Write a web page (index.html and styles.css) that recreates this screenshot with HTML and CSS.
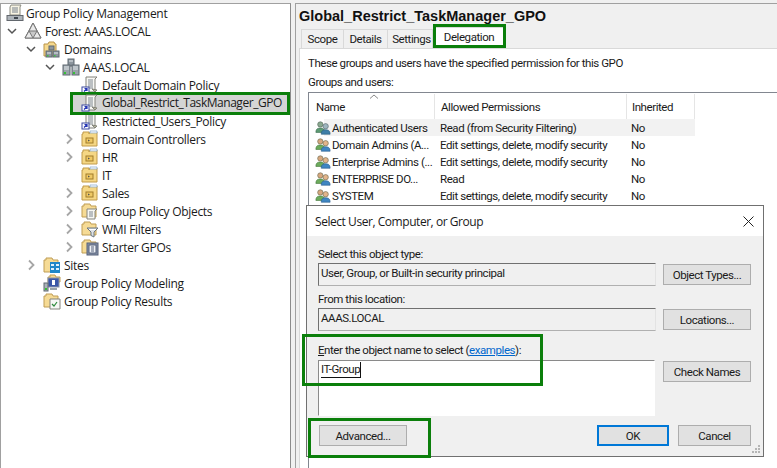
FILE: index.html
```html
<!DOCTYPE html>
<html lang="en">
<head>
<meta charset="utf-8">
<title>Group Policy Management</title>
<link rel="stylesheet" href="styles.css">
</head>
<body>
<svg class="defs" aria-hidden="true">
  <symbol id="i-root" viewBox="0 0 20 18">
    <path d="M5 1h10l-1 2v8H4V3z" fill="#f7f3e3" stroke="#8a8a80"/>
    <path d="M6 4h6M6 6h6M6 8h6" stroke="#77808c"/>
    <rect x="1" y="11.5" width="16" height="5" fill="#aeb4ba" stroke="#62676d"/>
    <rect x="8" y="13" width="4" height="2" fill="#3f464e"/>
  </symbol>
  <symbol id="i-forest" viewBox="0 0 18 18">
    <path d="M9 1l8 15H1z" fill="#c9c9c9" stroke="#6d6d6d"/>
    <path d="M9 1l-4 8h8zM5 9l-4 7h8zM13 9l-4 7h8z" fill="#e9e9e9" stroke="#777"/>
  </symbol>
  <symbol id="i-domains" viewBox="0 0 18 18">
    <path d="M1 16V4h4l1-2h5l1 2h1v12z" fill="#f6d98d" stroke="#b9944a"/>
    <rect x="6" y="6" width="5" height="4" fill="#8d969e" stroke="#5f6870"/>
    <rect x="3" y="11" width="6" height="6" fill="#8d969e" stroke="#5f6870"/>
    <rect x="10" y="11" width="6" height="6" fill="#8d969e" stroke="#5f6870"/>
    <path d="M4 13h4M11 13h4" stroke="#dfe4e8"/>
    <rect x="4" y="15" width="1.5" height="1.5" fill="#3fc23f"/>
    <rect x="11" y="15" width="1.5" height="1.5" fill="#3fc23f"/>
  </symbol>
  <symbol id="i-domain" viewBox="0 0 18 18">
    <rect x="6" y="1" width="6" height="7" fill="#8d969e" stroke="#5f6870"/>
    <rect x="1" y="7" width="7" height="10" fill="#9aa3aa" stroke="#5f6870"/>
    <rect x="10" y="7" width="7" height="10" fill="#9aa3aa" stroke="#5f6870"/>
    <path d="M7 3h4M2 9h5M2 11h5M11 9h5M11 11h5" stroke="#e3e7ea"/>
    <rect x="2" y="14" width="2" height="2" fill="#35c135"/>
    <rect x="11" y="14" width="2" height="2" fill="#35c135"/>
  </symbol>
  <symbol id="i-gpo" viewBox="0 0 18 18">
    <path d="M5 1h11l-2 2v13H5z" fill="#f8f8f4" stroke="#83837c"/>
    <path d="M7 4h5M7 6h5M7 8h5M7 10h5M7 12h5" stroke="#7f8790"/>
    <path d="M11 13l3 3 2-2z" fill="#b8b8a0" stroke="#85857a"/>
    <rect x="1" y="11" width="7" height="6" fill="#fff" stroke="#3c4aa0"/>
    <path d="M3 15.500l3-3M3.500 12.500H6V15" fill="none" stroke="#2435b5" stroke-width="1.200"/>
  </symbol>
  <symbol id="i-ou" viewBox="0 0 18 18">
    <path d="M1 16V4h1V2h6v2l1-2h7v14z" fill="#f5d784" stroke="#c19b4a"/>
    <path d="M9 1h7v2H9z" fill="#fff" stroke="#7fa5c8" stroke-width=".7"/>
    <rect x="5" y="8" width="7" height="5" fill="#efc964" stroke="#a17c2b"/>
    <path d="M7 9.500l2 1-2 1z" fill="#555"/>
  </symbol>
  <symbol id="i-gpos" viewBox="0 0 18 18">
    <path d="M1 15V4h2V2h6l1 2h5v11z" fill="#f6db95" stroke="#bf9d55"/>
    <path d="M6 7h10l-2 2v8H6z" fill="#f7f7f2" stroke="#85857e"/>
    <path d="M8 10h4M8 12h4M8 14h4" stroke="#7f8790"/>
  </symbol>
  <symbol id="i-wmi" viewBox="0 0 18 18">
    <path d="M1 15V4h2V2h6l1 2h5v11z" fill="#f6db95" stroke="#bf9d55"/>
    <path d="M6 8h11l-4 4v5l-3-1.500V12z" fill="#dfe3e7" stroke="#6b7680"/>
    <path d="M8 9.500h7" stroke="#fff"/>
  </symbol>
  <symbol id="i-starter" viewBox="0 0 18 18">
    <path d="M1 15V4h2V2h6l1 2h5v11z" fill="#f6db95" stroke="#bf9d55"/>
    <rect x="6" y="5" width="11" height="12" fill="#8793a8" stroke="#55607a"/>
    <rect x="8" y="7" width="7" height="8" fill="#eef1f6" stroke="#55607a"/>
    <path d="M10 9h3M10 11h3M10 13h3" stroke="#55607a"/>
  </symbol>
  <symbol id="i-sites" viewBox="0 0 18 18">
    <path d="M1 16V4h2V2h6l1 2h5v12z" fill="#f6db95" stroke="#bf9d55"/>
    <rect x="7" y="6" width="10" height="11" fill="#1f87c9"/>
    <path d="M8 8h3v2H8zM13 8h3v2h-3zM8 12h3v2H8zM13 12h3v2h-3z" fill="#dff1fb"/>
  </symbol>
  <symbol id="i-model" viewBox="0 0 18 18">
    <path d="M5 8V3h2V1h5l1 2h4v5z" fill="#f6db95" stroke="#bf9d55"/>
    <rect x="5" y="4" width="11" height="9" fill="#3a56a8" stroke="#8a94a8"/>
    <path d="M9 6h3v5H9z" fill="#fff"/>
    <path d="M7 14h7v2H7z" fill="#9aa3aa"/>
    <rect x="1" y="9" width="4" height="8" fill="#aab2b8" stroke="#5f6870"/>
    <rect x="2" y="14" width="2" height="2" fill="#35c135"/>
  </symbol>
  <symbol id="i-results" viewBox="0 0 18 18">
    <path d="M1 15V4h2V2h6l1 2h5v11z" fill="#f6db95" stroke="#bf9d55"/>
    <path d="M7 7h10v10H7z" fill="#f7f7f5" stroke="#85857e"/>
    <path d="M9 12l2 2 3-4" fill="none" stroke="#2d8a3c" stroke-width="1.200"/>
  </symbol>
  <symbol id="i-users" viewBox="0 0 18 16">
    <circle cx="6" cy="4" r="3" fill="#d7a77e" stroke="#6a6a50" stroke-width=".7"/>
    <path d="M1 13c0-4 2-5 5-5s5 1 5 5z" fill="#6cab5c" stroke="#44763c" stroke-width=".7"/>
    <circle cx="12" cy="6" r="3" fill="#e3b48a" stroke="#6a6a50" stroke-width=".7"/>
    <path d="M7 15c0-4 2-5 5-5s5 1 5 5z" fill="#3f86c2" stroke="#2b5f8e" stroke-width=".7"/>
  </symbol>
  <symbol id="i-users-grey" viewBox="0 0 18 16">
    <circle cx="6" cy="4" r="3" fill="#8aa890" stroke="#56695a" stroke-width=".7"/>
    <path d="M1 13c0-4 2-5 5-5s5 1 5 5z" fill="#5c9a72" stroke="#3e6a50" stroke-width=".7"/>
    <circle cx="12" cy="6" r="3" fill="#9db4bd" stroke="#5a6a70" stroke-width=".7"/>
    <path d="M7 15c0-4 2-5 5-5s5 1 5 5z" fill="#3f7fa8" stroke="#2b5f7e" stroke-width=".7"/>
  </symbol>
  <symbol id="i-open" viewBox="0 0 14 14"><path d="M3 5l4 4 4-4" fill="none" stroke="#555" stroke-width="1.500"/></symbol>
  <symbol id="i-closed" viewBox="0 0 14 14"><path d="M5 2.500L9.500 7 5 11.500" fill="none" stroke="#a6a6a6" stroke-width="1.800"/></symbol>
</svg>

<div class="app">
  <nav class="tree">
    <div class="row root"><svg class="ico root-ico"><use href="#i-root"/></svg><span>Group Policy Management</span></div>
    <div class="row l1"><svg class="chev"><use href="#i-open"/></svg><svg class="ico"><use href="#i-forest"/></svg><span>Forest: AAAS.LOCAL</span></div>
    <div class="row l2"><svg class="chev"><use href="#i-open"/></svg><svg class="ico"><use href="#i-domains"/></svg><span>Domains</span></div>
    <div class="row l3"><svg class="chev"><use href="#i-open"/></svg><svg class="ico"><use href="#i-domain"/></svg><span>AAAS.LOCAL</span></div>
    <div class="row l4"><span class="chev"></span><svg class="ico"><use href="#i-gpo"/></svg><span>Default Domain Policy</span></div>
    <div class="row l4"><span class="chev"></span><svg class="ico"><use href="#i-gpo"/></svg><span class="selected">Global_Restrict_TaskManager_GPO</span></div>
    <div class="row l4"><span class="chev"></span><svg class="ico"><use href="#i-gpo"/></svg><span>Restricted_Users_Policy</span></div>
    <div class="row l4"><svg class="chev"><use href="#i-closed"/></svg><svg class="ico"><use href="#i-ou"/></svg><span>Domain Controllers</span></div>
    <div class="row l4"><svg class="chev"><use href="#i-closed"/></svg><svg class="ico"><use href="#i-ou"/></svg><span>HR</span></div>
    <div class="row l4"><span class="chev"></span><svg class="ico"><use href="#i-ou"/></svg><span>IT</span></div>
    <div class="row l4"><svg class="chev"><use href="#i-closed"/></svg><svg class="ico"><use href="#i-ou"/></svg><span>Sales</span></div>
    <div class="row l4"><svg class="chev"><use href="#i-closed"/></svg><svg class="ico"><use href="#i-gpos"/></svg><span>Group Policy Objects</span></div>
    <div class="row l4"><svg class="chev"><use href="#i-closed"/></svg><svg class="ico"><use href="#i-wmi"/></svg><span>WMI Filters</span></div>
    <div class="row l4"><svg class="chev"><use href="#i-closed"/></svg><svg class="ico"><use href="#i-starter"/></svg><span>Starter GPOs</span></div>
    <div class="row l2"><svg class="chev"><use href="#i-closed"/></svg><svg class="ico"><use href="#i-sites"/></svg><span>Sites</span></div>
    <div class="row l2"><span class="chev"></span><svg class="ico"><use href="#i-model"/></svg><span>Group Policy Modeling</span></div>
    <div class="row l2"><span class="chev"></span><svg class="ico"><use href="#i-results"/></svg><span>Group Policy Results</span></div>
  </nav>

  <main class="pane">
    <h1 class="title">Global_Restrict_TaskManager_GPO</h1>
    <div class="tabs">
      <span class="tab t-scope">Scope</span>
      <span class="tab t-details">Details</span>
      <span class="tab t-settings">Settings</span>
      <span class="tab t-deleg active">Delegation</span>
    </div>
    <section class="page">
      <p class="line first">These groups and users have the specified permission for this GPO</p>
      <p class="line second">Groups and users:</p>
      <div class="list">
        <div class="lhead">
          <span class="c1">Name</span><span class="c2">Allowed Permissions</span><span class="c3">Inherited</span>
          <svg class="sort" viewBox="0 0 10 5"><path d="M1 4.500L5 1l4 3.500" fill="none" stroke="#8a8a8a"/></svg>
        </div>
        <div class="lrow hl"><svg class="uico"><use href="#i-users-grey"/></svg><span class="c1">Authenticated Users</span><span class="c2">Read (from Security Filtering)</span><span class="c3">No</span></div>
        <div class="lrow"><svg class="uico"><use href="#i-users"/></svg><span class="c1">Domain Admins (A...</span><span class="c2">Edit settings, delete, modify security</span><span class="c3">No</span></div>
        <div class="lrow"><svg class="uico"><use href="#i-users"/></svg><span class="c1">Enterprise Admins (...</span><span class="c2">Edit settings, delete, modify security</span><span class="c3">No</span></div>
        <div class="lrow"><svg class="uico"><use href="#i-users"/></svg><span class="c1">ENTERPRISE DO...</span><span class="c2">Read</span><span class="c3">No</span></div>
        <div class="lrow"><svg class="uico"><use href="#i-users"/></svg><span class="c1">SYSTEM</span><span class="c2">Edit settings, delete, modify security</span><span class="c3">No</span></div>
      </div>
    </section>
  </main>
</div>

<div class="dialog">
  <header class="dhead">
    <span>Select User, Computer, or Group</span>
    <svg class="close" viewBox="0 0 11 11"><path d="M.5.5l10 10M10.500.5l-10 10" stroke="#222" fill="none"/></svg>
  </header>
  <div class="dbody">
    <label class="dlabel">Select this object type:</label>
    <div class="drow">
      <div class="field">User, Group, or Built-in security principal</div>
      <button class="btn side">Object Types...</button>
    </div>
    <label class="dlabel from">From this location:</label>
    <div class="drow">
      <div class="field">AAAS.LOCAL</div>
      <button class="btn side">Locations...</button>
    </div>
    <label class="dlabel enter"><u>E</u>nter the object name to select (<a class="link">examples</a>):</label>
    <div class="drow names">
      <div class="area"><span class="typed">IT-Group</span></div>
      <button class="btn side">Check Names</button>
    </div>
    <div class="dfoot">
      <button class="btn adv">Advanced...</button>
      <button class="btn ok">OK</button>
      <button class="btn cancel">Cancel</button>
    </div>
  </div>
  <svg class="grip" viewBox="0 0 10 10"><path d="M7 1h2v2H7zM4 4h2v2H4zM7 4h2v2H7zM1 7h2v2H1zM4 7h2v2H4zM7 7h2v2H7z" fill="#b5b5b5"/></svg>
</div>

<div class="mark m-row"></div>
<div class="mark m-tab"></div>
<div class="mark m-enter"></div>
<div class="mark m-adv"></div>
</body>
</html>
```
FILE: styles.css
```css
* { box-sizing: border-box; }
html, body { margin: 0; padding: 0; }
body {
  width: 777px;
  height: 468px;
  overflow: hidden;
  position: relative;
  background: #f0f0f0;
  font-family: "Open Sans", "Noto Sans", sans-serif;
  font-size: 12px;
  color: #1a1a1a;
}
.defs { position: absolute; width: 0; height: 0; }
.app { display: flex; height: 468px; padding-top: 3px; }

/* tree */
.tree {
  width: 291px;
  flex: none;
  background: #fff;
  border-top: 1px solid #a0a0a0;
  border-left: 1px solid #a0a0a0;
  border-right: 1px solid #8c8c8c;
}
.row {
  display: flex;
  align-items: center;
  height: 18px;
  white-space: nowrap;
  letter-spacing: -.3px;
}
.root { padding-left: 5px; }
.l1 { padding-left: 4px; }
.l2 { padding-left: 23px; }
.l3 { padding-left: 42px; }
.l4 { padding-left: 61px; }
.chev { width: 14px; height: 14px; flex: none; display: block; }
.ico { width: 18px; height: 18px; flex: none; margin: 0 3px 0 5px; }
.root-ico { width: 20px; margin: 0; }
.selected {
  background: #d4d4d4;
  margin-left: -32px;
  padding-left: 32px;
  line-height: 18px;
  width: 219px;
  letter-spacing: -.46px;
}
.row:has(.selected) .ico { position: relative; z-index: 1; }

/* right pane */
.pane {
  flex: 1;
  margin-left: 4px;
  border-top: 1px solid #a0a0a0;
  border-left: 1px solid #a0a0a0;
  min-width: 0;
  font-family: Roboto, "Open Sans", sans-serif;
  font-size: 11.500px;
  letter-spacing: -.43px;
}
.title {
  margin: 0;
  padding: 3px 0 0 3px;
  height: 23px;
  font: bold 14.500px/18px "Liberation Sans", sans-serif;
  letter-spacing: 0;
  color: #111;
  white-space: nowrap;
}
.tabs { display: flex; height: 21px; padding-left: 5px; align-items: flex-end; }
.tab {
  height: 19px;
  display: flex;
  align-items: center;
  justify-content: center;
  background: #f0f0f0;
  border: 1px solid #d9d9d9;
  border-bottom: 0;
  border-left-width: 0;
}
.tab:first-child { border-left-width: 1px; }
.t-scope { width: 43px; }
.t-details { width: 44px; }
.t-settings { width: 45px; padding-left: 3px; }
.t-deleg { width: 73px; }
.tab.active { height: 21px; background: #fff; padding-bottom: 3px; }
.page {
  margin-left: 3px;
  height: 420px;
  background: #fff;
  border-top: 1px solid #d9d9d9;
  border-left: 1px solid #d9d9d9;
  padding: 5px 0 0 8px;
}
.line { margin: 0; line-height: 18px; white-space: nowrap; }
.second { margin-top: 1px; }
.list {
  margin-top: 1px;
  border-top: 1px solid #828790;
  border-left: 1px solid #828790;
  height: 376px;
}
.lhead, .lrow { display: flex; align-items: center; width: 386px; white-space: nowrap; }
.lhead { height: 26px; position: relative; padding-top: 1px; }
.lhead span { height: 100%; display: flex; align-items: center; border-right: 1px solid #e5e5e5; }
.lhead .c1 { width: 126px; padding-left: 7px; }
.lhead .c2 { width: 192px; padding-left: 6px; }
.lhead .c3 { width: 68px; padding-left: 5px; }
.sort { position: absolute; left: 60px; top: 1px; width: 10px; height: 5px; }
.lrow { height: 17px; padding-left: 6px; }
.lrow.hl { background: linear-gradient(90deg, #fff 15px, #f2f2f2 15px); }
.uico { width: 16px; height: 16px; flex: none; margin-right: 1px; }
.lrow .c1 { width: 108px; }
.lrow .c2 { width: 191px; }

/* dialog */
.dialog {
  position: absolute;
  left: 306px;
  top: 205px;
  width: 458px;
  height: 252px;
  background: #f0f0f0;
  border: 1px solid #707070;
}
.dhead {
  height: 30px;
  background: #fff;
  display: flex;
  align-items: center;
  justify-content: space-between;
  padding: 0 9px 0 8px;
  letter-spacing: -.45px;
}
.close { width: 11px; height: 11px; }
.dbody {
  padding: 9px 12px 0 11px;
  font-family: Roboto, "Open Sans", sans-serif;
  font-size: 11.500px;
  letter-spacing: -.43px;
}
.dlabel { display: block; line-height: 18px; white-space: nowrap; }
.from { margin-top: 4px; }
.enter { margin-top: 10px; }
.drow { display: flex; gap: 7px; align-items: flex-start; }
.names { padding-top: 1px; }
.field {
  width: 338px;
  height: 23px;
  background: #f0f0f0;
  border: 1px solid #8a8a8a;
  border-color: #707070 #e3e3e3 #b0b0b0 #707070;
  padding-left: 2px;
  line-height: 18px;
  white-space: nowrap;
}
.area {
  width: 337px;
  margin-right: 1px;
  height: 56px;
  background: #fff;
  border: 1px solid #fff;
  border-color: #8a8a8a #fff #fff #8a8a8a;
  padding: 0 0 0 2px;
  line-height: 16px;
}
.typed { display: inline-block; border-bottom: 1px solid #111; border-right: 1px solid #111; line-height: 15px; }
.btn {
  font: inherit;
  letter-spacing: inherit;
  color: inherit;
  background: #e1e1e1;
  border: 1px solid #adadad;
  height: 21px;
  padding: 0;
}
.side { width: 88px; margin-top: 1px; flex: none; }
.dfoot { display: flex; margin-top: 9px; padding-left: 1px; }
.adv { width: 88px; margin-right: auto; }
.ok { width: 72px; border: 2px solid #0078d7; margin-right: 9px; }
.cancel { width: 73px; }
.link { color: #0066cc; text-decoration: underline; }
.grip { position: absolute; right: 2px; bottom: 2px; width: 10px; height: 10px; }

/* green callouts */
.mark { position: absolute; border: 3px solid #0b7f0b; }
.m-row { left: 70px; top: 92px; width: 220px; height: 23px; }
.m-tab { left: 433px; top: 24px; width: 73px; height: 24px; }
.m-enter { left: 302px; top: 334px; width: 241px; height: 52px; }
.m-adv { left: 308px; top: 418px; width: 123px; height: 40px; }
```
